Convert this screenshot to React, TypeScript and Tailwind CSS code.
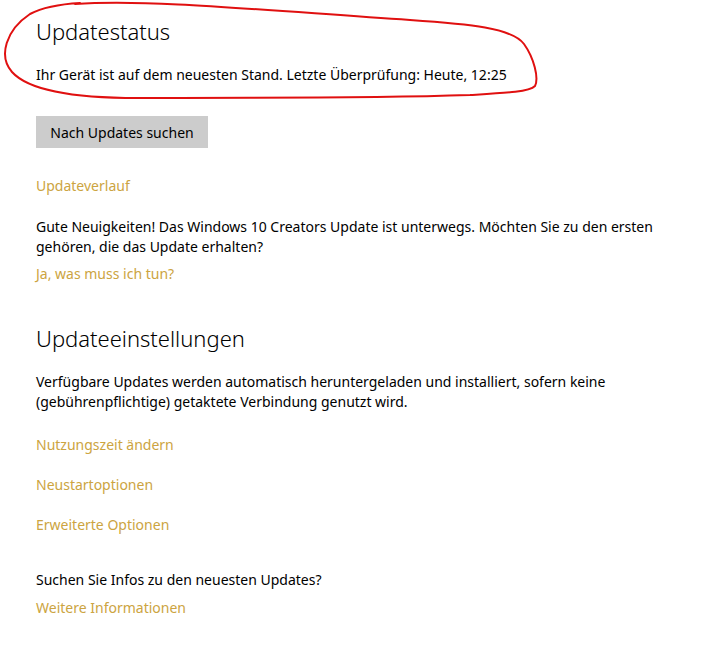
import React from "react";

const font = { fontFamily: '"Segoe UI", "Noto Sans", "Open Sans", sans-serif' };

const Link = ({ children, className = "" }: { children: React.ReactNode; className?: string }) => (
    <a className={`block text-[#cca441] text-[14px] leading-5 ${className}`}>{children}</a>
);

// hand drawn red marker around the status block
const RedCircle = () => (
    <svg className="absolute left-0 top-0 pointer-events-none" width="560" height="110" viewBox="0 0 560 110">
        <path
            d="M75 4 C 150 -1, 260 10, 410 20 C 470 24, 512 28, 524 44 C 534 58, 539 78, 535 86 C 529 92, 505 93, 470 95 C 350 99, 250 97, 150 98 C 80 99, 30 92, 12 72 C -2 56, 6 30, 30 14 C 45 6, 62 4, 80 3"
            fill="none"
            stroke="#e01010"
            strokeWidth="2"
            strokeLinecap="round"
        />
    </svg>
);

export default function App() {
    return (
        <div className="relative w-[704px] h-[652px] bg-white text-black overflow-hidden" style={font}>
            <RedCircle />
            <div className="px-9 pt-[15px]">
                <h1 className="text-[22px] font-light leading-8">Updatestatus</h1>
                <p className="mt-[18px] text-[14px] leading-5">
                    Ihr Gerät ist auf dem neuesten Stand. Letzte Überprüfung: Heute, 12:25
                </p>
                <button className="mt-[31px] h-8 w-[172px] bg-[#cccccc] text-[14px]">Nach Updates suchen</button>
                <Link className="mt-[28px]">Updateverlauf</Link>
                <p className="mt-[21px] text-[14px] leading-5">
                    Gute Neuigkeiten! Das Windows 10 Creators Update ist unterwegs. Möchten Sie zu den ersten
                    <br />
                    gehören, die das Update erhalten?
                </p>
                <Link className="mt-[7px]">Ja, was muss ich tun?</Link>

                <h2 className="mt-[38px] text-[22px] font-light leading-8">Updateeinstellungen</h2>
                <p className="mt-[18px] text-[14px] leading-5">
                    Verfügbare Updates werden automatisch heruntergeladen und installiert, sofern keine
                    <br />
                    (gebührenpflichtige) getaktete Verbindung genutzt wird.
                </p>
                <Link className="mt-[23px]">Nutzungszeit ändern</Link>
                <Link className="mt-5">Neustartoptionen</Link>
                <Link className="mt-5">Erweiterte Optionen</Link>

                <p className="mt-[35px] text-[14px] leading-5">Suchen Sie Infos zu den neuesten Updates?</p>
                <Link className="mt-2">Weitere Informationen</Link>
            </div>
        </div>
    );
}
